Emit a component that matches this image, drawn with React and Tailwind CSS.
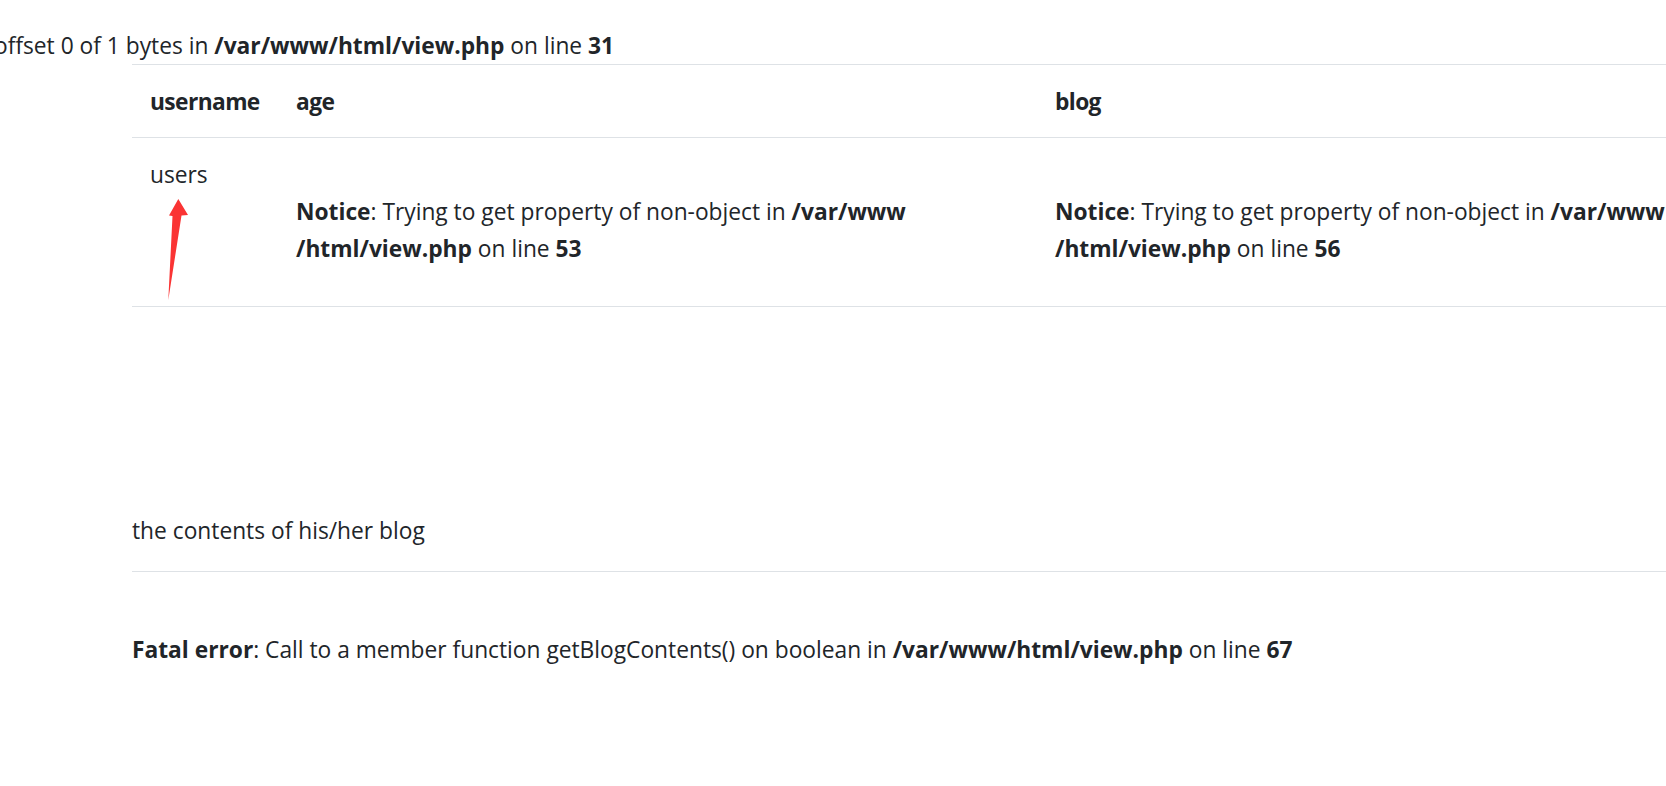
import React from 'react';

const rows = [
  { user: 'users', ageLine: 53, blogLine: 56 },
];

const NoticeCell = ({ line }) => (
  <div className="whitespace-nowrap">
    <div className="h-[37px]" />
    <div>
      <b>Notice</b>: Trying to get property of non-object in <b>/var/www</b>
    </div>
    <div>
      <b>/html/view.php</b> on line <b>{line}</b>
    </div>
  </div>
);

const App = () => {
  return (
    <div className="relative w-[1666px] h-[786px] overflow-hidden bg-white text-[#212529] font-['Open_Sans',sans-serif] text-[22.75px] leading-[37px]">
      {/* leftover notice, page is scrolled so the start is cut */}
      <div className="pt-[27px] -ml-[6px] whitespace-nowrap">
        offset 0 of 1 bytes in <b>/var/www/html/view.php</b> on line <b>31</b>
      </div>

      <div className="pl-[132px]">
        <div className="w-[1800px]">
          {/* header row */}
          <div className="grid grid-cols-[146px_759px_1fr] border-t border-b border-[#dee2e6] font-bold tracking-[-0.6px]">
            <div className="px-[18px] pt-[18px] pb-[17px]">username</div>
            <div className="px-[18px] pt-[18px] pb-[17px]">age</div>
            <div className="px-[18px] pt-[18px] pb-[17px]">blog</div>
          </div>

          {/* body rows */}
          {rows.map((row) => (
            <div key={row.user} className="grid grid-cols-[146px_759px_1fr] border-b border-[#dee2e6]">
              <div className="px-[18px] pt-[18px] pb-[39px]">{row.user}</div>
              <div className="px-[18px] pt-[18px] pb-[39px]">
                <NoticeCell line={row.ageLine} />
              </div>
              <div className="px-[18px] pt-[18px] pb-[39px]">
                <NoticeCell line={row.blogLine} />
              </div>
            </div>
          ))}
        </div>

        <div className="mt-[205px]">the contents of his/her blog</div>
        <div className="mt-[22px] w-[1800px] border-t border-[#dee2e6]" />

        <div className="mt-[59px] whitespace-nowrap">
          <b>Fatal error</b>: Call to a member function getBlogContents() on boolean in{' '}
          <b>/var/www/html/view.php</b> on line <b>67</b>
        </div>
      </div>

      {/* red annotation arrow */}
      <svg className="absolute left-0 top-0 pointer-events-none" width="260" height="320" viewBox="0 0 260 320">
        <polygon
          points="168.3,300 172.5,216 169,215.5 178.3,199 188,215 181.5,215.5"
          fill="#fa3434"
        />
      </svg>
    </div>
  );
};

export default App;
